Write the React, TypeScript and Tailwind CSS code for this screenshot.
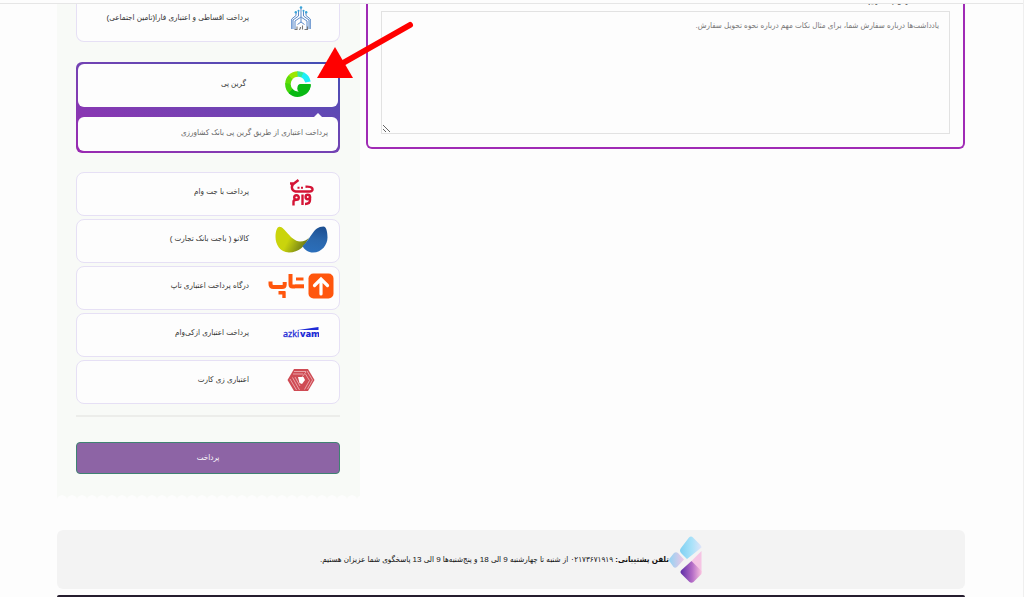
import type { ReactNode } from "react";

function FaraLogo() {
  return (
    <svg viewBox="0 0 20 25" className="h-[25px] w-5" fill="none" stroke="#5a8aca" strokeWidth="1">
      <path d="M10 2v9l-6 4v8M10 11l6 4v8M7.500 5v5L2 14v9M12.500 5v5l5.500 4v9M5 6.500v3L.7 13v10M15 6.500v3l4.300 3.500v10M10 12v4l-3.500 2.500M10 16l3.500 2.500" />
      <g fill="#3ba4d8" stroke="none">
        <circle cx="10" cy="1.500" r="1.300" />
        <circle cx="7.500" cy="4.800" r="1" />
        <circle cx="12.500" cy="4.800" r="1" />
        <circle cx="4.800" cy="6.300" r="1.200" />
        <circle cx="15.200" cy="6.300" r="1.200" />
      </g>
      <path d="M3.500 23.500h2.500v-3M8 23.500c1.500 0 1.500-1 1.500-2.500M11.500 23.500v-4M13.500 23.500h3v-3" stroke="#777" strokeWidth="1.100" />
    </svg>
  );
}

function GreenLogo() {
  return (
    <svg viewBox="0 0 26 26" className="size-[26px]" fill="none" strokeWidth="5.500">
      <path d="M2.900 13A10.200 10.200 0 0 1 6 5.700" stroke="#63dd08" />
      <path d="M5.500 6.200A10.200 10.200 0 0 1 13 2.900" stroke="#9be600" />
      <path d="M12.500 2.900A10.200 10.200 0 0 1 18 4.100" stroke="#35e79b" />
      <path d="M17.500 3.800A10.200 10.200 0 0 1 23 11" stroke="#1deef8" />
      <path d="M2.900 12.500A10.200 10.200 0 0 0 6.500 20.800" stroke="#42d60b" />
      <path d="M5.500 20A10.200 10.200 0 0 0 23 13.500" stroke="#08b914" />
      <path d="M15.500 13h10.300c0 3-1 5.500-2.500 7l-6 1.500c-3 .5-5-1-5-4 0-2.500 1.200-4.500 3.200-4.500z" fill="#08b914" />
    </svg>
  );
}

function JetLogo() {
  return (
    <svg viewBox="0 0 25 27" className="h-[27px] w-[25px]" fill="none" stroke="#d41435" strokeWidth="2.400">
      <path d="M9.500 1L5 4.500H1M5 4.500C2 6.500 2 11.500 6.500 12.500H21c2.500 0 3-2 2-3.500-1-1.300-3-1.500-6.500-1.300" />
      <path d="M8.500 8.700h2M12 8.700h2" strokeWidth="2" />
      <path d="M13.500 15.500v10.500" />
      <circle cx="7.500" cy="18.500" r="2.300" />
      <path d="M4.500 26.500v-4c0-1 1-1.800 3-1.800" />
      <circle cx="18.800" cy="18" r="2.200" />
      <path d="M21 17.500V21c0 3-2 4-5 4" />
    </svg>
  );
}

function BajetLogo() {
  return (
    <svg viewBox="0 0 53 27" className="h-[27px] w-[53px]">
      <defs>
        <linearGradient id="lime" x1="0" y1="0" x2="1" y2=".4">
          <stop offset=".5" stopColor="#cad40c" />
          <stop offset="1" stopColor="#6f7e17" />
        </linearGradient>
        <linearGradient id="blue" x1=".6" y1="0" x2=".4" y2="1">
          <stop offset="0" stopColor="#1c4f92" />
          <stop offset=".5" stopColor="#2a67ad" />
          <stop offset="1" stopColor="#2b6fbb" />
        </linearGradient>
      </defs>
      <path d="M4.500.7C10 .7 15 14.500 25 15.500c4 0 7-1.500 9-4C30 20 24 26.500 14 26.500 5 26.500.5 18 .5 11 .5 5 2 .7 4.500.7z" fill="url(#lime)" />
      <path d="M48.500.5C38 .5 36 13 27.500 20c2 4 6 6.500 10.500 6.500 9 0 14.500-8 14.500-15C52.500 5 51 .5 48.500.5z" fill="url(#blue)" />
    </svg>
  );
}

function TapLogo() {
  return (
    <svg viewBox="0 0 66 26" className="h-[26px] w-[66px]" fill="none" stroke="#ff560d" strokeWidth="4">
      <rect x="40.500" y=".5" width="25" height="25" rx="5" fill="#ff560d" stroke="none" />
      <path d="M53 21V8M46.500 12.500L53 6l6.500 6.500" stroke="#fff" strokeWidth="3.200" strokeLinecap="round" />
      <path d="M28 6h7.500" strokeWidth="3" />
      <path d="M36 13.300h-9" strokeWidth="4" />
      <path d="M22.500 1v10.500c0 1.300.8 1.900 2 1.900h2.500" />
      <path d="M2.500 8.500V11c0 2.200 1 3 3 3h8.500c2 0 2.700-1 2.700-2.500V9" />
      <path d="M10.500 19.700h7M16 19v6" strokeWidth="3.400" />
    </svg>
  );
}

function AzkiLogo() {
  return (
    <svg viewBox="0 0 36 14" className="h-3.5 w-9" fill="#1f2bd6" direction="ltr">
      <path d="M15 4L35.500 1v3z" />
      <text x="0" y="11" fontFamily="Open Sans, sans-serif" fontSize="9" stroke="#1f2bd6" strokeWidth=".3">azki</text>
      <text x="17" y="11" fontFamily="Open Sans, sans-serif" fontSize="9" fontWeight="800">vam</text>
    </svg>
  );
}

function ZCardLogo() {
  return (
    <svg viewBox="0 0 28 24" className="h-6 w-7" fill="none">
      <path d="M7 1h14l6.500 11L21 23H7L.5 12z" fill="#cf4b54" />
      <path d="M7 3.500h12M6 6h10M19 4l-4 5M20 3l5.500 9-5 9M18.500 6l4 6.500-5 9M3 11l6.500 11M5.500 9.500l7 12.500M8 9l5 9" stroke="#f3c9cb" strokeWidth=".7" />
      <path d="M11 9h5.500l1.500 3-3 4-2.500-1z" fill="#fff" />
    </svg>
  );
}

function SupportLogo() {
  return (
    <svg viewBox="0 0 33 47" className="h-[47px] w-[33px] shrink-0">
      <defs>
        <linearGradient id="sky" x1="0" x2="1">
          <stop offset="0" stopColor="#7fd0f2" />
          <stop offset=".55" stopColor="#a9e2f9" />
          <stop offset="1" stopColor="#e0e4f8" />
        </linearGradient>
        <linearGradient id="ice" x1="0" x2="1">
          <stop offset="0" stopColor="#92d4f3" />
          <stop offset="1" stopColor="#efc5e5" />
        </linearGradient>
        <linearGradient id="violet" x1="0" x2="1">
          <stop offset="0" stopColor="#5c2da6" />
          <stop offset=".55" stopColor="#b36bc6" />
          <stop offset="1" stopColor="#fac2df" />
        </linearGradient>
      </defs>
      <path d="M20 1.500q2-2 4 0l7 7q1.500 1.500 1.500 3L18 23l-6-6q-2-2.500 0-5z" fill="url(#sky)" />
      <path d="M5 17q2-1.500 4 0l6 6.500L8 31q-2 1.500-3.500 0L1 26q-2-2 0-4z" fill="url(#ice)" />
      <path d="M32.500 15v22L22.500 25z" fill="#f5c4e4" />
      <path d="M22.500 25l10 10v3l-8 8q-2 1.500-4 0l-8-8q-2-2 0-4z" fill="url(#violet)" />
    </svg>
  );
}

function OptionBody({ id, title, logo, checked = false }: { id: string; title: string; logo: ReactNode; checked?: boolean }) {
  return (
    <>
      <input type="radio" name="payment" id={id} defaultChecked={checked} className="sr-only" />
      <span className="flex w-[66px] shrink-0 justify-center">{logo}</span>
      <span>{title}</span>
    </>
  );
}

const options = [
  { id: "jet", title: "پرداخت با جت وام", logo: <JetLogo /> },
  { id: "bajet", title: "کالانو ( باجت بانک تجارت )", logo: <BajetLogo /> },
  { id: "tap", title: "درگاه پرداخت اعتباری تاپ", logo: <TapLogo /> },
  { id: "azki", title: "پرداخت اعتباری ازکی‌وام", logo: <AzkiLogo /> },
  { id: "zcard", title: "اعتباری زی کارت", logo: <ZCardLogo /> },
];

export default function App() {
  return (
    <div
      dir="rtl"
      className="relative flex min-h-screen flex-col overflow-hidden border-r border-[#efefef] bg-[#fdfdfd] pr-px font-['Liberation_Sans','DejaVu_Sans_Condensed','DejaVu_Sans',sans-serif] text-[8px] leading-3 text-[#333]"
    >
      <header className="-mr-px h-1 border-b border-[#e6e6e6]" />
      <div className="mx-auto flex w-full max-w-[908px] grow flex-col">
        <main className="flex items-start gap-1.5">
          <section className="grow rounded-b-md border-2 border-t-0 border-[#a02bb5] px-[13px] pb-[13px]">
            <label htmlFor="notes" className="mb-[5px] flex h-0.5 items-end overflow-hidden pr-px leading-[10px]">
              یادداشت سفارش (اختیاری)
            </label>
            <textarea
              id="notes"
              placeholder="یادداشت‌ها درباره سفارش شما، برای مثال نکات مهم درباره نحوه تحویل سفارش."
              className="block h-[123px] w-full resize border border-[#e2e2e2] px-2.5 py-2 placeholder:text-[#777]"
            />
          </section>

          <aside className="w-[303px] shrink-0">
            <div className="bg-[#f8faf7] px-5 pb-5 pl-[19px]">
              <label htmlFor="fara" className="flex h-[38px] items-start gap-[19px] rounded-b-lg border border-t-0 border-[#e6e0f5] bg-[#fdfdfd] pr-[5px] pt-[2px]">
                <input type="radio" name="payment" id="fara" className="sr-only" />
                <span className="flex w-[66px] shrink-0 justify-center"><FaraLogo /></span>
                <span className="pt-[6px]">پرداخت اقساطی و اعتباری فارا(تامین اجتماعی)</span>
              </label>

              <div className="mt-5 flex flex-col gap-[10px] rounded-md bg-linear-to-tr from-[#9a28b1] to-[#3f4fb5] p-0.5">
                <label htmlFor="green" className="flex h-[43px] items-center gap-[19px] rounded-md bg-[#fdfdfd] pb-1 pr-[7px]">
                  <OptionBody id="green" title="گرین پی" logo={<GreenLogo />} checked />
                </label>
                <div className="relative rounded-md bg-[#fdfdfd] px-2.5 pb-3 pt-2.5 text-[#666]">
                  <span className="absolute -top-1 right-4 border-x-4 border-b-4 border-x-transparent border-b-[#fdfdfd]" />
                  پرداخت اعتباری از طریق گرین پی بانک کشاورزی
                </div>
              </div>

              <div className="mt-[19px] flex flex-col gap-[3px]">
                {options.map((option) => (
                  <label
                    key={option.id}
                    htmlFor={option.id}
                    className="flex h-11 items-center gap-[19px] rounded-lg border border-[#e6e0f5] bg-[#fdfdfd] pb-1 pr-[5px]"
                  >
                    <OptionBody {...option} />
                  </label>
                ))}
              </div>

              <hr className="mt-[11px] border-t-2 border-[#ecedea]" />
              <button
                type="button"
                className="mt-[25px] flex h-8 w-full items-center justify-center rounded border border-[#3f8272] bg-[#8d64a5] text-white"
              >
                پرداخت
              </button>
            </div>
            <svg className="block h-[5px] w-full" aria-hidden="true">
              <defs>
                <pattern id="scallop" width="10" height="5" patternUnits="userSpaceOnUse">
                  <path d="M0 0h10v5C9 0 1 0 0 5z" fill="#f8faf7" />
                </pattern>
              </defs>
              <rect width="100%" height="5" fill="url(#scallop)" />
            </svg>
          </aside>
        </main>

        <section className="mt-[31px] flex h-[59px] items-center justify-center rounded-md bg-[#f3f3f3] text-[#111]">
          <SupportLogo />
          <p>
            <strong>تلفن پشتیبانی:</strong> ۰۲۱۷۳۶۷۱۹۱۹ از شنبه تا چهارشنبه 9 الی 18 و پنج‌شنبه‌ها 9 الی 13 پاسخگوی شما عزیزان هستیم.
          </p>
        </section>
        <footer className="mt-1.5 min-h-0.5 grow rounded-t-md bg-[#251d2e]" />
      </div>

      <svg viewBox="0 0 98 60" className="pointer-events-none absolute left-[317px] top-[21px] h-[60px] w-[98px]" aria-hidden="true">
        <path d="M93 4L26 42" stroke="#f00" strokeWidth="6" strokeLinecap="round" />
        <path d="M0 57L18 26l18 31z" fill="#f00" />
      </svg>
    </div>
  );
}
